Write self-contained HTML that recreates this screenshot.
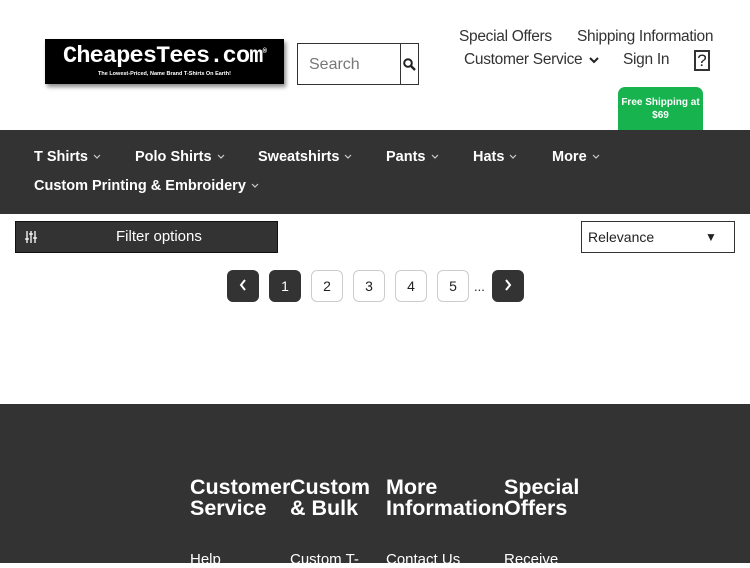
<!DOCTYPE html>
<html><head><style>
*{margin:0;padding:0;box-sizing:border-box}
body{width:750px;height:563px;overflow:hidden;background:#fff;font-family:"Liberation Sans",Arial,sans-serif;position:relative;color:#222}
.a{position:absolute;white-space:nowrap}
.logo{left:45px;top:39px;width:239px;height:45px;background:#000;box-shadow:2px 3px 4px rgba(0,0,0,.45);color:#fff;text-align:center}
.logo b{display:block;font-family:"Liberation Mono",monospace;font-size:23.5px;margin-top:4px;letter-spacing:-0.8px}
.logo i{display:block;font-style:normal;font-size:5.5px;font-weight:bold;margin-top:1px}
.search{left:297px;top:43px;width:122px;height:42px;border:1px solid #333}
.search span{position:absolute;left:11px;top:12px;font-size:16px;color:#777}
.search .sb{position:absolute;left:102px;top:0;width:1px;height:40px;background:#333}
.tl{font-size:15.5px;color:#333;letter-spacing:-0.3px}
.nav{left:0;top:130px;width:750px;height:84px;background:#333}
.nav span{position:absolute;color:#fff;font-weight:bold;font-size:14.5px}
.nav svg{margin-left:5px;vertical-align:middle}
.btn{width:32px;height:32px;border-radius:6px;border:1px solid #ccc;text-align:center;line-height:30px;font-size:14px;top:270px}
.dk{background:#333;color:#fff;border-color:#333}
.foot{left:0;top:404px;width:750px;height:159px;background:#333}
.fh{color:#fff;font-weight:bold;font-size:21.5px;line-height:21px;top:477px}
.fl{color:#fff;font-size:15px;top:551px}
</style></head><body>
<div class="a logo"><b>CheapesTees.com<sup style="font-size:7px">®</sup></b><i>The Lowest-Priced, Name Brand T-Shirts On Earth!</i></div>
<div class="a search"><span>Search</span><div class="sb"></div>
<svg style="position:absolute;left:105px;top:14px" width="13" height="13" viewBox="0 0 13 13"><circle cx="5" cy="5" r="3.8" fill="none" stroke="#222" stroke-width="2"/><path d="M8 8l4 4" stroke="#222" stroke-width="2.4"/></svg></div>
<div class="a tl" style="left:459px;top:28px">Special Offers</div>
<div class="a tl" style="left:577px;top:28px">Shipping Information</div>
<div class="a tl" style="left:464px;top:51px">Customer Service <svg width="10" height="8" viewBox="0 0 10 8" style="margin-left:3px"><path d="M1 2l4 4 4-4" fill="none" stroke="#222" stroke-width="2"/></svg></div>
<div class="a tl" style="left:623px;top:51px">Sign In</div>
<div class="a" style="left:694px;top:50px;width:16px;height:21px;border:2px solid #333;font-size:17px;line-height:17px;text-align:center;color:#222">?</div>
<div class="a" style="left:618px;top:87px;width:85px;height:44px;background:#16b34f;border-radius:7px 7px 0 0;color:#fff;font-size:10px;font-weight:bold;text-align:center;line-height:13px;padding-top:9px;white-space:normal">Free Shipping at $69</div>
<div class="a nav">
<span style="left:34px;top:19px">T Shirts<svg width="8" height="6" viewBox="0 0 8 6"><path d="M1 1l3 3 3-3" fill="none" stroke="#ccc" stroke-width="1.2"/></svg></span>
<span style="left:135px;top:19px">Polo Shirts<svg width="8" height="6" viewBox="0 0 8 6"><path d="M1 1l3 3 3-3" fill="none" stroke="#ccc" stroke-width="1.2"/></svg></span>
<span style="left:258px;top:19px">Sweatshirts<svg width="8" height="6" viewBox="0 0 8 6"><path d="M1 1l3 3 3-3" fill="none" stroke="#ccc" stroke-width="1.2"/></svg></span>
<span style="left:386px;top:19px">Pants<svg width="8" height="6" viewBox="0 0 8 6"><path d="M1 1l3 3 3-3" fill="none" stroke="#ccc" stroke-width="1.2"/></svg></span>
<span style="left:473px;top:19px">Hats<svg width="8" height="6" viewBox="0 0 8 6"><path d="M1 1l3 3 3-3" fill="none" stroke="#ccc" stroke-width="1.2"/></svg></span>
<span style="left:552px;top:19px">More<svg width="8" height="6" viewBox="0 0 8 6"><path d="M1 1l3 3 3-3" fill="none" stroke="#ccc" stroke-width="1.2"/></svg></span>
<span style="left:34px;top:48px">Custom Printing &amp; Embroidery<svg width="8" height="6" viewBox="0 0 8 6"><path d="M1 1l3 3 3-3" fill="none" stroke="#ccc" stroke-width="1.2"/></svg></span>
</div>
<div class="a" style="left:15px;top:221px;width:263px;height:32px;background:#333;border:1px solid #111;color:#fff;font-size:15px;line-height:30px"><span style="position:absolute;left:100px">Filter options</span>
<svg style="position:absolute;left:9px;top:9px" width="12" height="12" viewBox="0 0 12 12" stroke="#fff" stroke-width="1.3"><path d="M2 0v12M6 0v12M10 0v12M0 8h4M4 3h4M8 7h4"/></svg></div>
<div class="a" style="left:581px;top:221px;width:154px;height:32px;border:1px solid #333;font-size:14px;line-height:30px;padding-left:6px">Relevance<span style="position:absolute;left:123px;font-size:12px">▼</span></div>
<div class="a btn dk" style="left:227px"><svg width="8" height="12" viewBox="0 0 8 12"><path d="M6 1L2 6l4 5" fill="none" stroke="#fff" stroke-width="2"/></svg></div>
<div class="a btn dk" style="left:269px">1</div>
<div class="a btn" style="left:311px">2</div>
<div class="a btn" style="left:353px">3</div>
<div class="a btn" style="left:395px">4</div>
<div class="a btn" style="left:437px">5</div>
<div class="a" style="left:474px;top:279px;font-size:13px">...</div>
<div class="a btn dk" style="left:492px"><svg width="8" height="12" viewBox="0 0 8 12"><path d="M2 1l4 5-4 5" fill="none" stroke="#fff" stroke-width="2"/></svg></div>
<div class="a foot"></div>
<div class="a fh" style="left:190px">Customer<br>Service</div>
<div class="a fh" style="left:290px">Custom<br>&amp; Bulk</div>
<div class="a fh" style="left:386px">More<br>Information</div>
<div class="a fh" style="left:504px">Special<br>Offers</div>
<div class="a fl" style="left:190px">Help</div>
<div class="a fl" style="left:290px">Custom T-</div>
<div class="a fl" style="left:386px">Contact Us</div>
<div class="a fl" style="left:504px">Receive</div>
</body></html>
